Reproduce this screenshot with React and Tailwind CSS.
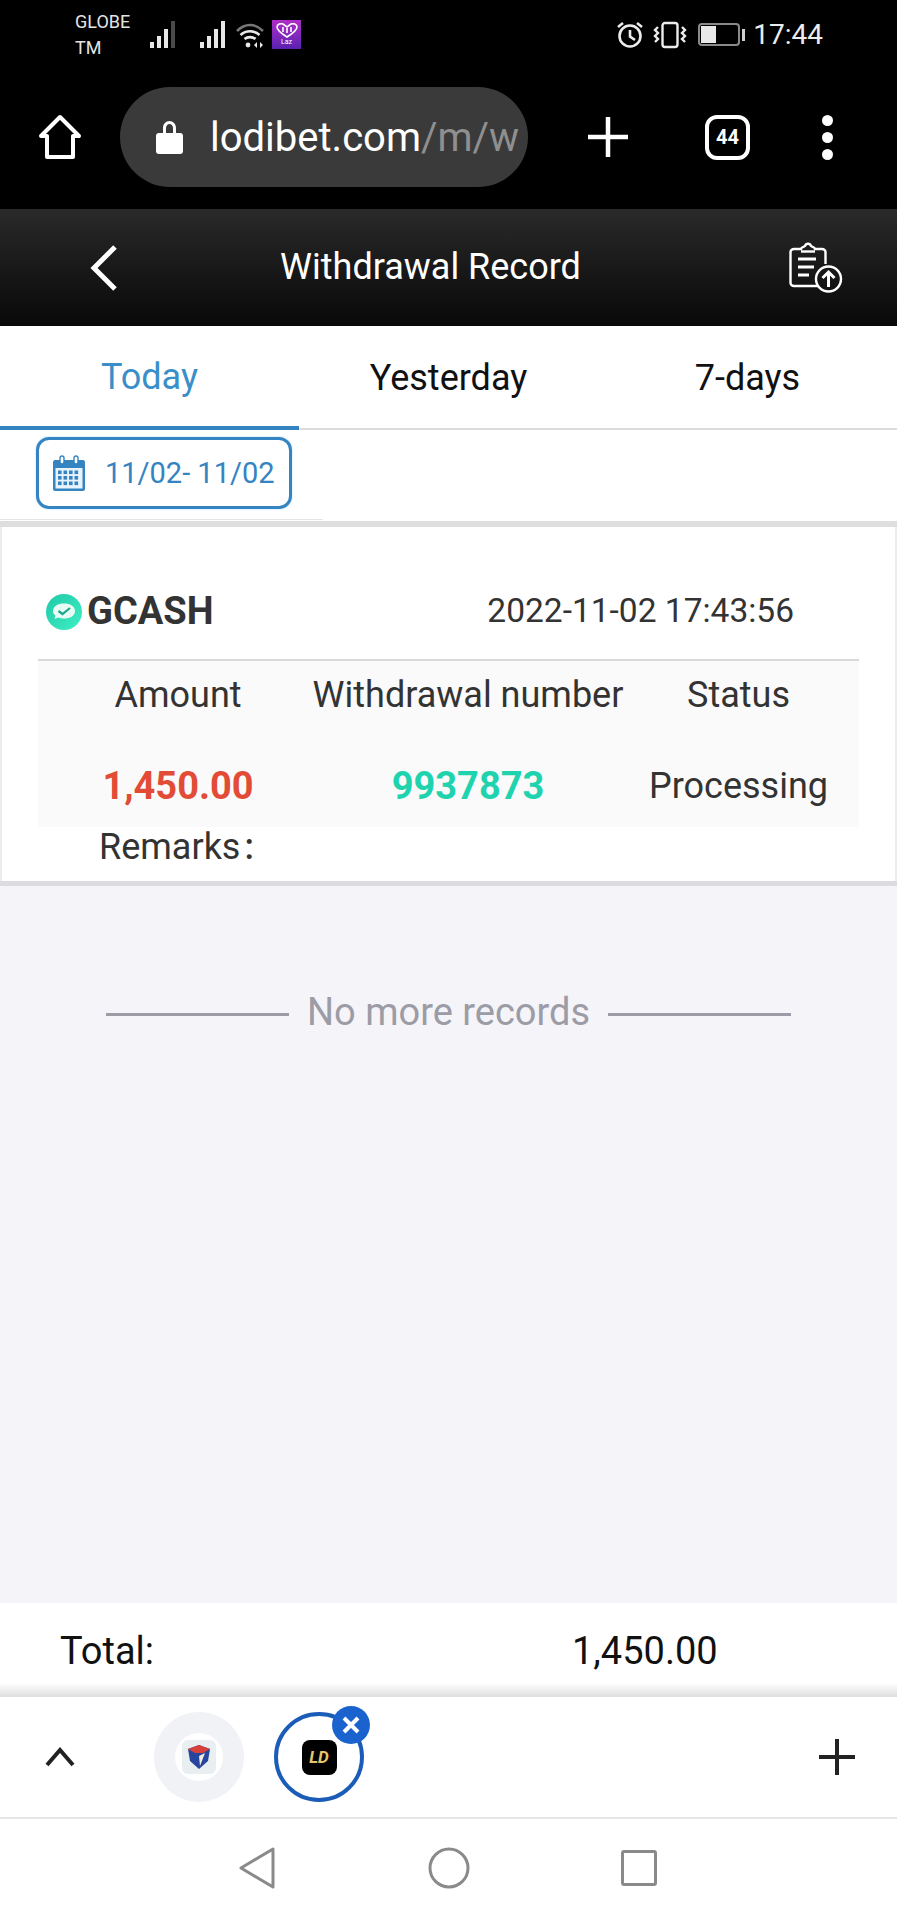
import React from "react";

const font = { fontFamily: "Roboto, 'Noto Sans', sans-serif" };

function SignalBars({ dim }) {
  return (
    <svg width="30" height="28" viewBox="0 0 30 28" fill="#e8e8e8">
      <rect x="1" y="21" width="4" height="6" />
      <rect x="8" y="15" width="4" height="12" />
      <rect x="15" y="8" width="4" height="19" />
      <rect x="22" y="0" width="4" height="27" fill={dim ? "#4a4a4a" : "#e8e8e8"} />
    </svg>
  );
}

function StatusBar() {
  return (
    <div className="h-[68px] flex items-center text-[#e4e4e4] relative">
      <div className="ml-[75px] w-[74px] text-[18px] leading-[26px] mt-[1px] whitespace-nowrap">
        <div>GLOBE</div>
        <div>TM</div>
      </div>
      <div className="flex items-center mt-[1px]">
        <SignalBars dim />
        <div className="w-[20px]" />
        <SignalBars />
        <svg width="32" height="28" viewBox="0 0 32 28" fill="none" stroke="#e8e8e8" strokeWidth="2.6" className="ml-[5px]">
          <path d="M3 10 C11 2 21 2 29 10" stroke="#777" />
          <path d="M6.5 14 C12 9 20 9 25.5 14" />
          <path d="M10.5 18 C13.5 15.5 18.5 15.5 21.5 18" />
          <circle cx="14" cy="24" r="2.4" fill="#e8e8e8" stroke="none" />
          <path d="M23 21 L20 24 L23 27 Z M26 21 L29 24 L26 27 Z" fill="#e8e8e8" stroke="none" />
        </svg>
        <div className="ml-[6px] w-[29px] h-[29px] bg-gradient-to-b from-[#b02cc8] to-[#5a1fb0] flex flex-col items-center justify-center">
          <svg width="22" height="15" viewBox="0 0 22 15" fill="none" stroke="#fff" strokeWidth="1.6">
            <path d="M11 14 C3 9 1 6 1 4 C1 1 5 0 7 1 L11 4 L15 1 C17 0 21 1 21 4 C21 6 19 9 11 14 Z" />
            <path d="M7 4 V9 M11 5 V10 M15 4 V9" />
          </svg>
          <span className="text-[7px] leading-[8px] text-white">Laz</span>
        </div>
      </div>
      <div className="ml-auto mr-[74px] flex items-center mt-[1px]">
        <svg width="28" height="28" viewBox="0 0 28 28" fill="none" stroke="#ececec" strokeWidth="2.6">
          <circle cx="14" cy="15" r="10.5" />
          <path d="M14 9 V15.5 L19 19" />
          <path d="M2 6 L7 2 M26 6 L21 2" />
        </svg>
        <svg width="36" height="28" viewBox="0 0 36 28" fill="none" stroke="#ececec" strokeWidth="2.4" className="ml-[8px]">
          <rect x="10.5" y="2" width="15" height="24" rx="2.5" />
          <path d="M6 6 L3 9 L6 12 L3 15 L6 18 L3 21" />
          <path d="M30 6 L33 9 L30 12 L33 15 L30 18 L33 21" />
        </svg>
        <div className="ml-[10px] flex items-center">
          <div className="w-[42px] h-[23px] border-2 border-[#8a8a8a] rounded-[4px] p-[1px]">
            <div className="w-[15px] h-full bg-[#e8e8e8]" />
          </div>
          <div className="w-[3px] h-[12px] bg-[#cfcfcf] ml-[2px]" />
        </div>
        <span className="ml-[8px] text-[28px] leading-[32px] text-[#ececec]">17:44</span>
      </div>
    </div>
  );
}

function BrowserBar() {
  return (
    <div className="h-[141px] pt-[19px] flex items-start">
      <div className="w-[120px] h-[100px] flex items-center pl-[38px]">
        <svg width="44" height="46" viewBox="0 0 44 46" fill="none" stroke="#fff" strokeWidth="4" strokeLinejoin="round">
          <path d="M22 3 L41 22 H35 V43 H9 V22 H3 Z" />
        </svg>
      </div>
      <div className="w-[408px] h-[100px] rounded-full bg-[#3a3a3a] flex items-center pl-[36px] overflow-hidden">
        <svg width="27" height="34" viewBox="0 0 27 34" fill="#fff" className="shrink-0">
          <path d="M7 14 V8 C7 4 10 1 13.5 1 C17 1 20 4 20 8 V14 H17 V8 C17 6 15.5 4 13.5 4 C11.5 4 10 6 10 8 V14 Z" />
          <rect x="0" y="13" width="27" height="21" rx="3" />
        </svg>
        <div className="ml-[27px] w-[304px] pt-[2px] whitespace-nowrap text-[40px] leading-[44px] text-white">
          lodibet.com<span className="text-[#8f8f8f]">/m/w</span>
        </div>
      </div>
      <div className="flex-1 h-[100px] flex items-center">
        <svg width="40" height="40" viewBox="0 0 40 40" stroke="#fff" strokeWidth="4.5" className="ml-[60px]">
          <path d="M20 0 V40 M0 20 H40" />
        </svg>
        <div className="ml-[77px] w-[45px] h-[45px] border-[4px] border-white rounded-[12px] flex items-center justify-center text-white font-bold text-[20px] leading-none">
          44
        </div>
        <div className="ml-[72px] flex flex-col gap-[6px]">
          <div className="w-[11px] h-[11px] rounded-full bg-white" />
          <div className="w-[11px] h-[11px] rounded-full bg-white" />
          <div className="w-[11px] h-[11px] rounded-full bg-white" />
        </div>
      </div>
    </div>
  );
}

function PageHeader() {
  return (
    <div className="h-[117px] bg-gradient-to-b from-[#2a2a2a] to-[#090909] flex items-center relative">
      <svg width="28" height="46" viewBox="0 0 28 46" fill="none" stroke="#fff" strokeWidth="5" className="ml-[90px]">
        <path d="M25 2 L4 23 L25 44" />
      </svg>
      <div className="absolute left-0 right-[36px] text-center text-white text-[36px] leading-[40px] mt-[-2px]">Withdrawal Record</div>
      <svg width="54" height="52" viewBox="0 0 54 52" fill="none" stroke="#fff" strokeWidth="2.4" className="ml-auto mr-[54px]">
        <path d="M29 44 H5 C3 44 1.5 42.5 1.5 41 V10 C1.5 8.5 3 7 5 7 H12 C12 5 15 5 16 4 C17 1 21 1 22 4 C23 5 26 5 26 7 H33 C35 7 36.5 8.5 36.5 10 V22" />
        <path d="M12 9.5 H26" />
        <path d="M9 17 H27 M9 25 H25 M9 33 H20" strokeWidth="3" />
        <circle cx="39.5" cy="37" r="12.5" />
        <path d="M39.5 45 V30 M33.5 36 L39.5 30 L45.5 36" strokeWidth="3" />
      </svg>
    </div>
  );
}

function Tabs() {
  return (
    <div className="h-[104px] bg-white grid grid-cols-3 border-b-2 border-[#dcdcdc] relative text-[36px] leading-[40px]">
      <div className="flex items-center justify-center pt-[2px] text-[#3a8fc9] border-b-[4px] border-[#3484c2] mb-[-2px]">Today</div>
      <div className="flex items-center justify-center pt-[1px] text-[#111]">Yesterday</div>
      <div className="flex items-center justify-center pt-[1px] text-[#111]">7-days</div>
    </div>
  );
}

function CalendarIcon() {
  return (
    <svg width="32" height="36" viewBox="0 0 32 36" fill="#3484c2">
      <path d="M2 5 H30 C31 5 32 6 32 7 V34 C32 35 31 36 30 36 H2 C1 36 0 35 0 34 V7 C0 6 1 5 2 5 Z" />
      <rect x="2.5" y="13" width="27" height="20.5" fill="#e8f3fb" />
      <rect x="7" y="1" width="4" height="8" rx="2" fill="#fff" stroke="#3484c2" strokeWidth="1.4" />
      <rect x="21" y="1" width="4" height="8" rx="2" fill="#fff" stroke="#3484c2" strokeWidth="1.4" />
      {[15.5, 21, 26.5].map((y) =>
        [5, 10.5, 16, 21.5].map((x) => <rect key={x + "-" + y} x={x} y={y} width="3.6" height="3.6" />)
      )}
    </svg>
  );
}

function DateRow() {
  return (
    <div className="h-[91px] bg-white">
      <div className="w-[323px] h-[90px] border-b border-[#e4e4e4] pl-[36px] pt-[7px]">
        <div className="w-[256px] h-[72px] border-[3px] border-[#3484c2] rounded-[13px] flex items-center pl-[14px] shadow-[0_0_2px_#9fd8f5]">
          <CalendarIcon />
          <span className="ml-[20px] text-[#3484c2] text-[29px] leading-[36px] whitespace-nowrap">11/02- 11/02</span>
        </div>
      </div>
    </div>
  );
}

function GcashIcon() {
  return (
    <svg width="36" height="36" viewBox="0 0 36 36" className="mt-[2px] shrink-0">
      <defs>
        <linearGradient id="gc" x1="0" y1="0" x2="1" y2="1">
          <stop offset="0" stopColor="#1fc8a8" />
          <stop offset="1" stopColor="#3ff0c4" />
        </linearGradient>
      </defs>
      <circle cx="18" cy="18" r="18" fill="url(#gc)" />
      <path d="M7 17 C7 12 12 9.5 18 9.5 C24 9.5 29 12 29 17 C29 22 24 24.5 18 24.5 C16 24.5 14 24.2 12.5 23.5 L8.5 25 L9.5 21.5 C8 20.5 7 19 7 17 Z" fill="#e8fbf5" />
      <path d="M12.5 17 L16.5 20 L24 14" fill="none" stroke="#1ba98e" strokeWidth="2.2" />
    </svg>
  );
}

function RecordCard() {
  return (
    <div className="h-[354px] mx-[2px] bg-white text-[#333]">
      <div className="h-[132px] pl-[44px] pr-[101px] pt-[65px] flex items-start">
        <GcashIcon />
        <span className="ml-[5px] text-[38px] leading-[38px] font-bold whitespace-nowrap">GCASH</span>
        <span className="ml-auto text-[33.5px] leading-[38px] whitespace-nowrap">2022-11-02 17:43:56</span>
      </div>
      <div className="mx-[36px] bg-[#fafafa] border-t-2 border-[#d9d9d9] h-[168px] grid grid-cols-[280px_300px_1fr] grid-rows-[68px_1fr] text-[36px] leading-[40px] text-center">
        <div className="flex items-center justify-center">Amount</div>
        <div className="flex items-center justify-center whitespace-nowrap">Withdrawal number</div>
        <div className="flex items-center justify-center">Status</div>
        <div className="flex items-center justify-center font-bold text-[#e24c36] text-[38px] pt-[16px]">1,450.00</div>
        <div className="flex items-center justify-center font-bold text-[#1fd3ae] text-[38px] pt-[16px]">9937873</div>
        <div className="flex items-center justify-center whitespace-nowrap pt-[16px]">Processing</div>
      </div>
      <div className="pl-[97px] text-[36px] leading-[40px]">
        Remarks<span className="ml-[4px] font-medium">:</span>
      </div>
    </div>
  );
}

function NoMore() {
  return (
    <div className="flex-1 bg-[#f4f4f9] pt-[106px]">
      <div className="flex items-center justify-center text-[#9c9ca6] text-[38px] leading-[40px]">
        <div className="w-[183px] h-[3px] bg-[#9c9ca6] mt-[4px]" />
        <span className="mx-[18px] whitespace-nowrap">No more records</span>
        <div className="w-[183px] h-[3px] bg-[#9c9ca6] mt-[4px]" />
      </div>
    </div>
  );
}

function TotalBar() {
  return (
    <div className="h-[94px] bg-white">
      <div className="h-[80px] flex items-center pl-[60px] pt-[15px] text-[38px] leading-[40px] text-[#111]">
        <span className="w-[512px]">Total:</span>
        <span>1,450.00</span>
      </div>
      <div className="h-[14px] bg-gradient-to-b from-white to-[#dedede]" />
    </div>
  );
}

function TabStrip() {
  return (
    <div className="h-[122px] bg-white border-b-2 border-[#e6e6e6] flex items-center pl-[45px]">
      <svg width="30" height="20" viewBox="0 0 30 20" fill="none" stroke="#222" strokeWidth="4">
        <path d="M2 18 L15 3 L28 18" />
      </svg>
      <div className="ml-[79px] w-[90px] h-[90px] rounded-full bg-[#f1f2f6] flex items-center justify-center">
        <div className="w-[48px] h-[48px] rounded-full bg-white flex items-center justify-center">
          <div className="w-[34px] h-[34px] rounded-[6px] bg-[#e9eef0] flex items-center justify-center">
            <svg width="24" height="26" viewBox="0 0 24 26">
              <path d="M12 1 L23 5 L21 17 L12 25 L3 17 L1 5 Z" fill="#27459c" />
              <path d="M1 5 L12 1 L23 5 L16 9 H8 Z" fill="#d9403a" />
              <path d="M12 12 L18 9 L13 22 Z" fill="#f1ece0" />
            </svg>
          </div>
        </div>
      </div>
      <div className="ml-[30px] w-[90px] h-[90px] rounded-full border-[4px] border-[#1a5cb8] flex items-center justify-center relative">
        <div className="w-[35px] h-[35px] rounded-[8px] bg-black flex items-center justify-center text-[#e6c56b] font-bold italic text-[17px] leading-none">
          LD
        </div>
        <div className="absolute right-[-10px] top-[-10px] w-[38px] h-[38px] rounded-full bg-[#1a63cf] flex items-center justify-center">
          <svg width="18" height="18" viewBox="0 0 18 18" stroke="#fff" strokeWidth="4">
            <path d="M2 2 L16 16 M16 2 L2 16" />
          </svg>
        </div>
      </div>
      <svg width="36" height="36" viewBox="0 0 36 36" stroke="#222" strokeWidth="4" className="ml-auto mr-[42px]">
        <path d="M18 0 V36 M0 18 H36" />
      </svg>
    </div>
  );
}

function NavBar() {
  return (
    <div className="flex-none h-[101px] bg-white flex items-center pl-[238px] pb-[4px]">
      <svg width="38" height="42" viewBox="0 0 38 42" fill="none" stroke="#8a8a8a" strokeWidth="3" strokeLinejoin="round">
        <path d="M35 2 V40 L3 21 Z" />
      </svg>
      <svg width="42" height="42" viewBox="0 0 42 42" fill="none" stroke="#8a8a8a" strokeWidth="3" className="ml-[152px]">
        <circle cx="21" cy="21" r="19" />
      </svg>
      <svg width="36" height="36" viewBox="0 0 36 36" fill="none" stroke="#8a8a8a" strokeWidth="3" className="ml-[151px]">
        <rect x="1.5" y="1.5" width="33" height="33" rx="1.5" />
      </svg>
    </div>
  );
}

export default function App() {
  return (
    <div className="w-[897px] h-[1920px] flex flex-col overflow-hidden bg-black" style={font}>
      <StatusBar />
      <BrowserBar />
      <PageHeader />
      <Tabs />
      <DateRow />
      <div className="h-[6px] bg-[#dedede]" />
      <div className="bg-[#ececf0] border-b-[5px] border-[#dcdce0]">
        <RecordCard />
      </div>
      <NoMore />
      <TotalBar />
      <TabStrip />
      <NavBar />
    </div>
  );
}
